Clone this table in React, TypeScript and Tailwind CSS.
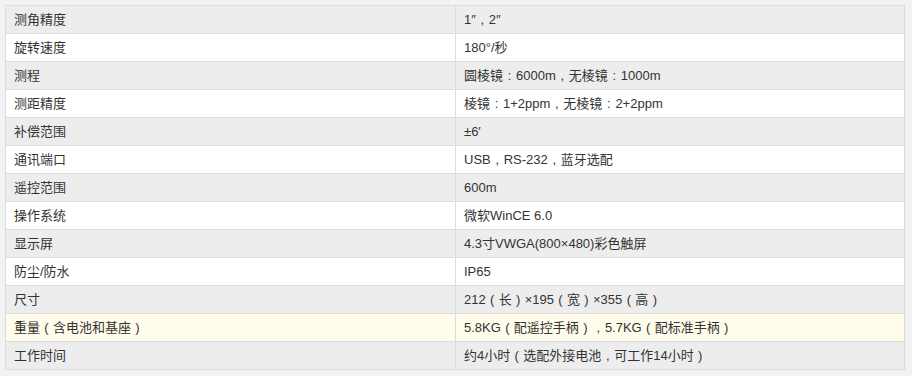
import React from "react";

const rows: [string, string][] = [
  ["测角精度", "1″，2″"],
  ["旋转速度", "180°/秒"],
  ["测程", "圆棱镜：6000m，无棱镜：1000m"],
  ["测距精度", "棱镜：1+2ppm，无棱镜：2+2ppm"],
  ["补偿范围", "±6′"],
  ["通讯端口", "USB，RS-232，蓝牙选配"],
  ["遥控范围", "600m"],
  ["操作系统", "微软WinCE 6.0"],
  ["显示屏", "4.3寸VWGA(800×480)彩色触屏"],
  ["防尘/防水", "IP65"],
  ["尺寸", "212（长）×195（宽）×355（高）"],
  ["重量（含电池和基座）", "5.8KG（配遥控手柄），5.7KG（配标准手柄）"],
  ["工作时间", "约4小时（选配外接电池，可工作14小时）"],
];

const map: Record<string, string> = { "（": "(", "）": ")", "，": ",", "：": ":" };

function T({ s }: { s: string }) {
  const parts = s.split(/([（），：])/);
  return (
    <>
      {parts.map((p, i) =>
        map[p] ? (
          <span key={i} className="inline-block w-[13px] text-center">
            {map[p]}
          </span>
        ) : (
          <span key={i}>{p}</span>
        )
      )}
    </>
  );
}

export default function App() {
  return (
    <div
      className="w-[912px] h-[376px] bg-[#f2f2f2] pt-[5px] pl-[5px] text-[13px] text-[#333]"
      style={{ fontFamily: '"Liberation Sans", "Noto Sans CJK SC", sans-serif' }}
    >
      <div className="w-[900px] border-t border-l border-r border-[#dcdcdc]">
        {rows.map(([k, v], i) => {
          const bg =
            i === 11 ? "bg-[#fffcec]" : i % 2 === 0 ? "bg-[#ededed]" : "bg-white";
          return (
            <div key={i} className={`flex h-[28px] border-b border-[#dcdcdc] ${bg}`}>
              <div className="w-[450px] border-r border-[#dcdcdc] pl-[8px] flex items-center whitespace-pre">
                <T s={k} />
              </div>
              <div className="flex-1 pl-[8px] flex items-center whitespace-pre">
                <T s={v} />
              </div>
            </div>
          );
        })}
      </div>
    </div>
  );
}
